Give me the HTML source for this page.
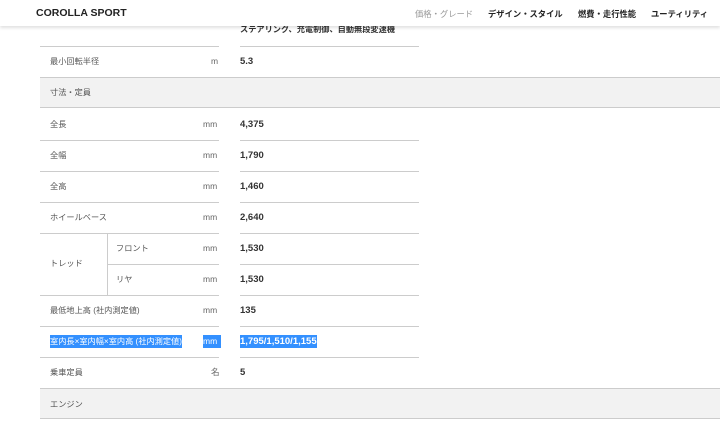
<!DOCTYPE html>
<html><head><meta charset="utf-8">
<style>
*{margin:0;padding:0;box-sizing:border-box}
body{width:720px;height:428px;overflow:hidden;background:#fff;font-family:"Liberation Sans","Noto Sans CJK JP",sans-serif;color:#333;position:relative}
.hdr{position:absolute;left:0;top:0;width:720px;height:26px;background:#fff;box-shadow:0 2px 3px rgba(0,0,0,.12);z-index:5}
.logo{position:absolute;left:36px;top:7px;font-size:10.5px;font-weight:bold;color:#222}
.nav{position:absolute;top:8px;font-size:8.3px;font-weight:bold;color:#222;white-space:nowrap}
.t{position:absolute;font-size:8.2px;color:#555;white-space:nowrap;line-height:11px}
.v{position:absolute;left:240px;font-size:9.5px;font-weight:bold;color:#333;white-space:nowrap;line-height:11px}
.u{position:absolute;font-size:8.5px;color:#666;line-height:11px}
.ln{position:absolute;height:1px;background:#ccc}
.sec{position:absolute;left:40px;width:680px;height:31px;background:#f2f2f2;border-top:1px solid #ccc;border-bottom:1px solid #ccc}
.sel{background:#3390ff;color:#fff!important;padding:1px 0}
</style></head><body>
<div class="hdr">
<div class="logo">COROLLA SPORT</div>
<div class="nav" style="left:415px;color:#999;font-weight:normal">価格・グレード</div>
<div class="nav" style="left:488px">デザイン・スタイル</div>
<div class="nav" style="left:578px">燃費・走行性能</div>
<div class="nav" style="left:651px">ユーティリティ</div>
</div>
<div class="v" style="top:24px;font-size:8.2px">ステアリング、充電制御、自動無段変速機</div>
<div class="ln" style="left:40px;width:179px;top:46px"></div>
<div class="ln" style="left:240px;width:179px;top:46px"></div>
<div class="t" style="left:50px;top:56px">最小回転半径</div><div class="u" style="left:211px;top:56px">m</div><div class="v" style="top:56px">5.3</div>
<div class="sec" style="top:77px"></div><div class="t" style="left:50px;top:87px">寸法・定員</div>

<div class="t" style="left:50px;top:119px">全長</div><div class="u" style="left:203px;top:119px">mm</div><div class="v" style="top:119px">4,375</div>
<div class="ln" style="left:40px;width:179px;top:140px"></div><div class="ln" style="left:240px;width:179px;top:140px"></div>
<div class="t" style="left:50px;top:150px">全幅</div><div class="u" style="left:203px;top:150px">mm</div><div class="v" style="top:150px">1,790</div>
<div class="ln" style="left:40px;width:179px;top:171px"></div><div class="ln" style="left:240px;width:179px;top:171px"></div>
<div class="t" style="left:50px;top:181px">全高</div><div class="u" style="left:203px;top:181px">mm</div><div class="v" style="top:181px">1,460</div>
<div class="ln" style="left:40px;width:179px;top:202px"></div><div class="ln" style="left:240px;width:179px;top:202px"></div>
<div class="t" style="left:50px;top:212px">ホイールベース</div><div class="u" style="left:203px;top:212px">mm</div><div class="v" style="top:212px">2,640</div>
<div class="ln" style="left:40px;width:179px;top:233px"></div><div class="ln" style="left:240px;width:179px;top:233px"></div>
<div class="t" style="left:50px;top:258px">トレッド</div>
<div class="ln" style="left:107px;width:1px;top:233px;height:62px"></div>
<div class="t" style="left:116px;top:243px">フロント</div><div class="u" style="left:203px;top:243px">mm</div><div class="v" style="top:243px">1,530</div>
<div class="ln" style="left:107px;width:112px;top:264px"></div><div class="ln" style="left:240px;width:179px;top:264px"></div>
<div class="t" style="left:116px;top:274px">リヤ</div><div class="u" style="left:203px;top:274px">mm</div><div class="v" style="top:274px">1,530</div>
<div class="ln" style="left:40px;width:179px;top:295px"></div><div class="ln" style="left:240px;width:179px;top:295px"></div>
<div class="t" style="left:50px;top:305px">最低地上高 (社内測定値)</div><div class="u" style="left:203px;top:305px">mm</div><div class="v" style="top:305px">135</div>
<div class="ln" style="left:40px;width:179px;top:326px"></div><div class="ln" style="left:240px;width:179px;top:326px"></div>
<div class="t sel" style="left:50px;top:335px">室内長×室内幅×室内高 (社内測定値)</div><div class="u sel" style="left:203px;top:335px;width:18px">mm</div><div class="v sel" style="top:335px">1,795/1,510/1,155</div>
<div class="ln" style="left:40px;width:179px;top:357px"></div><div class="ln" style="left:240px;width:179px;top:357px"></div>
<div class="t" style="left:50px;top:367px">乗車定員</div><div class="u" style="left:211px;top:367px">名</div><div class="v" style="top:367px">5</div>
<div class="sec" style="top:388px"></div><div class="t" style="left:50px;top:399px">エンジン</div>
</body></html>
